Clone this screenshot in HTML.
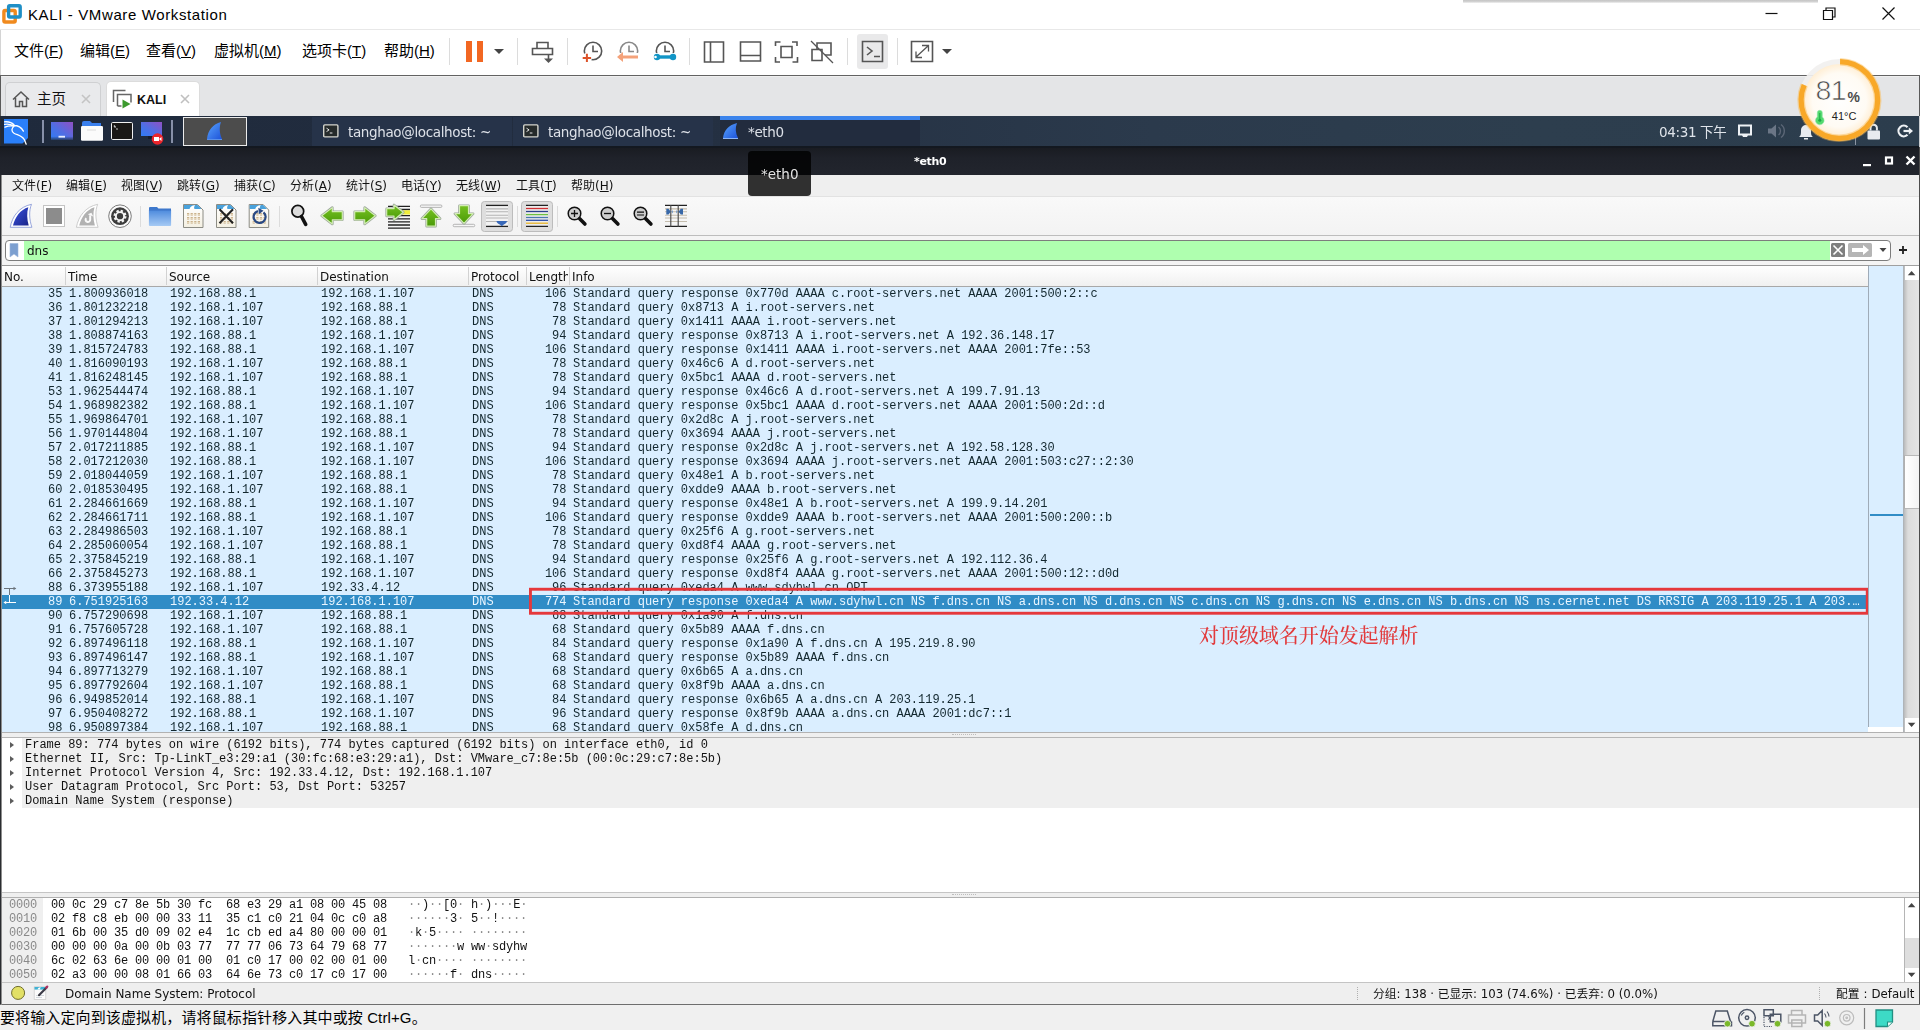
<!DOCTYPE html>
<html lang="zh-CN"><head><meta charset="utf-8"><title>KALI - VMware Workstation</title>
<style>
*{box-sizing:border-box;margin:0;padding:0}
html,body{width:1920px;height:1030px;overflow:hidden;background:#fff}
body{position:relative;font-family:"Liberation Sans","Noto Sans CJK SC",sans-serif;color:#000}
.abs{position:absolute}
#rows,#details,#hex,.ph,.wm,.st,.ptxt,#ftext,.gs{will-change:transform}
#titlebar{left:0;top:0;width:1920px;height:30px;background:#fff;border-bottom:1px solid #e8e8e8}
#vtitle{left:28px;top:4px;font-size:15px;letter-spacing:.62px;line-height:22px;color:#000;white-space:nowrap}
#vmenu{left:0;top:30px;width:1920px;height:46px;background:#fff;border-bottom:1px solid #626262}
.vm{top:41px;font-size:15px;line-height:20px;white-space:nowrap;color:#000;font-family:"Liberation Sans","Noto Sans CJK SC",sans-serif}
.vm u{text-decoration:underline;text-underline-offset:1px}
#tabarea{left:0;top:76px;width:1920px;height:40px;background:#e4e5e7;border-top:1px solid #efefef}
.vtab{top:82px;height:34px;border:1px solid #d0d0d0;border-bottom:none;border-radius:5px 5px 0 0;font-size:14px;line-height:32px;white-space:nowrap}
#panel{left:0;top:116px;width:1920px;height:31px;background:linear-gradient(90deg,#1f2a3c 0,#222d3f 30%,#2b3a4c 60%,#2d3e4e 80%,#2c3d4d 100%)}
.ptxt{top:122px;font-family:"DejaVu Sans","Noto Sans CJK SC",sans-serif;font-size:13.5px;letter-spacing:-.36px;line-height:20px;color:#dde1e8;white-space:nowrap}
#wtitle{left:0;top:147px;width:1920px;height:28px;background:linear-gradient(#191b21,#1f222a 40%,#22252d)}
#wmenu{left:2px;top:175px;width:1917px;height:21px;background:#efefef}
.wm{top:177px;font-size:12px;line-height:18px;white-space:nowrap;color:#111;font-family:"DejaVu Sans","Noto Sans CJK SC",sans-serif}
#wtool{left:2px;top:196px;width:1917px;height:40px;background:linear-gradient(#f9f9f9,#f3f3f3);border-top:1px solid #e2e2e2;border-bottom:1px solid #bdbdbd}
#wfilter{left:2px;top:236px;width:1917px;height:29px;background:#f4f4f4}
#fbox{left:5px;top:240px;width:1886px;height:21px;border:1px solid #7d7d7d;border-radius:4px;background:#fff;overflow:hidden}
#fgreen{left:18px;top:0;width:1806px;height:19px;background:#afffaf}
#ftext{left:27px;top:242px;font-family:"DejaVu Sans",sans-serif;font-size:12px;line-height:18px;color:#111}
#plist{left:2px;top:265px;width:1917px;height:467px;background:#fff;border-top:1px solid #a0a0a0}
#phead{left:2px;top:265px;width:1867px;height:22px;background:linear-gradient(#ffffff,#f0f0f0);border-top:1px solid #9a9a9a;border-bottom:1px solid #a8a8a8}
.ph{top:269px;font-family:"DejaVu Sans",sans-serif;font-size:12px;line-height:16px;color:#111;white-space:nowrap}
.phs{top:267px;width:1px;height:18px;background:#d2d2d2}
#rows{left:2px;top:287px;width:1866px;height:445px;background:#daeeff;overflow:hidden;font-family:"Liberation Mono",monospace;font-size:12px;line-height:14px;color:#12272e;letter-spacing:-.0134px}
.r{position:relative;height:14px;width:1866px;white-space:pre}
.r span{position:absolute;top:0;height:14px}
.c0{left:0;width:60.5px;text-align:right}
.c1{left:67px}.c2{left:168px}.c3{left:319px}.c4{left:470px}
.c5{left:520px;width:44.5px;text-align:right}
.c6{left:571px}
.r.sel{background:#308cc6;color:#eaf6ff}
#mini{left:1868px;top:266px;width:36px;height:461px;background:#daeeff;border-left:1px solid #9fabb8}
#vsb{left:1903px;top:266px;width:16px;height:466px;background:linear-gradient(90deg,#a8aeb4 0,#c4c4c4 2px,#dcdcdc 5px,#e4e4e4 100%)}
#split1{left:2px;top:732px;width:1917px;height:5px;background:#efefef;border-top:1px solid #b2b2b2}
#details{left:2px;top:737px;border-top:1px solid #b6b6b6;width:1917px;height:155px;background:#fff;font-family:"Liberation Mono",monospace;font-size:12px;letter-spacing:-.0134px;line-height:14px;color:#111}
.d{position:relative;height:14px;white-space:pre}
.d i{position:absolute;left:8px;top:4px;width:0;height:0;border-left:4px solid #5c5c5c;border-top:3.5px solid transparent;border-bottom:3.5px solid transparent}
.d span{position:absolute;left:20px;right:0;top:0;height:14px;background:#efefef;padding-left:3px}
#split2{left:2px;top:892px;width:1917px;height:5px;background:#efefef;border-top:1px solid #c5c5c5}
#hex{left:2px;top:897px;width:1917px;height:85px;background:#fff;font-family:"Liberation Mono",monospace;font-size:12px;letter-spacing:-.2px;line-height:14px;color:#111;overflow:hidden;border-top:1px solid #b0b0b0}
.h{position:relative;height:14px;white-space:pre}
.h b{position:absolute;left:0;top:0;width:41px;height:14px;background:#efefef;color:#8a8a8a;font-weight:normal;padding-left:7px}
.h span{position:absolute;top:0}
.h em{font-style:normal;color:#8c8c8c}
.h .x{left:49px}.h .a{left:406px}
#wstatus{left:2px;top:982px;width:1917px;height:22px;background:#efefef;border-top:1px solid #c4c4c4}
.st{top:986px;font-family:"DejaVu Sans","Noto Sans CJK SC",sans-serif;font-size:12px;line-height:16px;color:#111;white-space:nowrap}
#vstatus{left:0;top:1004px;width:1920px;height:26px;background:#f0f0f0;border-top:1px solid #6e6e6e}
#vstext{left:0px;top:1008px;letter-spacing:.12px;font-size:15px;line-height:20px;white-space:nowrap;color:#000}
</style></head><body>
<!-- VMware title bar -->
<div id="titlebar" class="abs"></div>
<svg class="abs" style="left:0px;top:0px" width="26" height="28" viewBox="0 0 26 28"><rect x="3.900" y="10.450" width="11.300" height="11.600" rx="1.200" fill="none" stroke="#f08a1e" stroke-width="3.400"/><rect x="8.600" y="5.700" width="11.600" height="11.350" rx="1.200" fill="none" stroke="#1f8fc6" stroke-width="3.400"/></svg>
<div id="vtitle" class="abs">KALI - VMware Workstation</div>
<svg class="abs" style="left:1760px;top:3px" width="140" height="22" viewBox="0 0 140 22"><path d="M5.5 10.5h12" stroke="#111" stroke-width="1.2"/><path d="M63.5 7.5h9v9h-9z M66 7.5v-2.5h9v9h-2.5" fill="none" stroke="#111" stroke-width="1.2"/><path d="M122.5 4.5l12 12M134.5 4.5l-12 12" stroke="#111" stroke-width="1.2"/></svg>
<div class="abs" style="left:1463px;top:0;width:355px;height:3px;background:linear-gradient(#c4c4c4,#d4d4d4 60%,#f4f4f4)"></div>
<!-- VMware menu -->
<div id="vmenu" class="abs"></div>
<div class="abs vm" style="left:14px">文件(<u>F</u>)</div>
<div class="abs vm" style="left:80px">编辑(<u>E</u>)</div>
<div class="abs vm" style="left:146px">查看(<u>V</u>)</div>
<div class="abs vm" style="left:214px">虚拟机(<u>M</u>)</div>
<div class="abs vm" style="left:302px">选项卡(<u>T</u>)</div>
<div class="abs vm" style="left:384px">帮助(<u>H</u>)</div>
<!-- VMware toolbar icons -->
<svg class="abs" style="left:440px;top:30px" width="520" height="45" viewBox="0 0 520 45" fill="none" stroke="#555" stroke-width="1.6">
<g stroke="#dcdcdc" stroke-width="1"><path d="M9.5 8v27M77.5 8v27M127.5 8v27M249.5 8v27M407.5 8v27M457.5 8v27"/></g>
<rect x="26" y="11" width="6" height="21" fill="#f26722" stroke="none"/><rect x="37" y="11" width="6" height="21" fill="#f26722" stroke="none"/>
<path d="M54 19h10l-5 5z" fill="#444" stroke="none"/>
<!-- send ctrl-alt-del -->
<path d="M97 12.500h11v6h-11z M92.500 18.500h20v6h-20z M108.500 24.500v5" /><path d="M104 28.500h9l-4.500 4.500z" fill="#555" stroke="none"/>
<!-- snapshot clocks -->
<circle cx="153" cy="21" r="8.700"/><path d="M153 15.500v6h5"/><circle cx="146.900" cy="27.900" r="5" fill="#fff" stroke="none"/><path d="M142.700 27.900h8.400M146.900 23.700v8.400" stroke="#dc532a" stroke-width="2"/>
<circle cx="189" cy="21" r="8.700" stroke="#888"/><path d="M189 15.500v6h5" stroke="#888"/><rect x="177" y="23" width="24" height="8" fill="#fff" stroke="none"/><path d="M179 27h19" stroke="#f4a27a" stroke-width="3"/><path d="M183 22l-6 5l6 5z" fill="#f4a27a" stroke="none"/>
<circle cx="225" cy="21" r="8.700"/><path d="M225 15.500v6h5"/><rect x="213" y="23" width="24" height="8" fill="#fff" stroke="none"/><path d="M216 27h17" stroke="#1295c6" stroke-width="3.400"/><circle cx="217" cy="27" r="3.200" fill="#1295c6" stroke="none"/><circle cx="233" cy="27" r="3.200" fill="#1295c6" stroke="none"/><circle cx="215.500" cy="27" r="1.300" fill="#fff" stroke="none"/>
<!-- layout icons -->
<path d="M264.500 12h19v20h-19z M270.500 12v20"/>
<path d="M300.500 12h20v19h-20z M300.500 25.500h20"/>
<path d="M335.500 16v-4h5M352 12h5v4M357.500 27v5h-5M340 32h-4.500v-5M341 16.500h11v11h-11z"/>
<path d="M372 19.500h10v11h-10z M377 19v-6h14v12h-6" stroke="#555"/><path d="M371 11l22 22" stroke="#555" stroke-width="1.300"/>
<!-- console button -->
<rect x="417" y="4" width="31" height="35" rx="3" fill="#e9e9ea" stroke="none"/>
<path d="M422.500 11.500h20v20h-20z"/><path d="M427 17l5 4l-5 4M434 26.500h6"/>
<!-- fullscreen -->
<path d="M471.500 11.500h21v20h-21z" /><path d="M476 27l12-11M482 15.500h6.500v6M476 21.500v6h6" stroke-width="1.300"/>
<path d="M502 19h10l-5 5z" fill="#444" stroke="none"/>
</svg>
<!-- Tab area -->
<div id="tabarea" class="abs"></div>
<div class="abs" style="left:0;top:30px;width:1px;height:45px;background:#d4d4d4"></div><div class="abs" style="left:0;top:76px;width:1px;height:40px;background:#5a5a5a"></div>
<div class="abs vtab" style="left:5px;width:96px;background:#e9eaec;border-color:#cfd0d2"></div>
<svg class="abs" style="left:11px;top:89px" width="20" height="20" viewBox="0 0 20 20" fill="none" stroke="#555" stroke-width="1.500"><path d="M2 10.500l8-7.500l8 7.500M4.500 9v8.500h4v-5h3v5h4v-8.500"/></svg>
<div class="abs" style="left:37px;top:89px;font-size:14.500px;line-height:20px;color:#111">主页</div>
<svg class="abs" style="left:80px;top:93px" width="12" height="12" viewBox="0 0 12 12"><path d="M2 2l8 8M10 2l-8 8" stroke="#c4c4c4" stroke-width="1.600"/></svg>
<div class="abs vtab" style="left:106px;top:81px;height:35px;width:94px;background:#fff;border-color:#dcdcdc"></div>
<svg class="abs" style="left:112px;top:88px" width="22" height="22" viewBox="0 0 22 22" fill="none" stroke="#666" stroke-width="1.500"><path d="M1.500 14v-11.500h12"/><path d="M5.500 18v-11.500h13.500v8"/><path d="M5.500 18h4"/><path d="M10.500 11.500v9l8-4.500z" fill="#3c9a2e" stroke="none"/></svg>
<div class="abs" style="left:137px;top:90px;font-size:12.500px;font-weight:bold;line-height:20px;color:#111;letter-spacing:0px">KALI</div>
<svg class="abs" style="left:179px;top:93px" width="12" height="12" viewBox="0 0 12 12"><path d="M2 2l8 8M10 2l-8 8" stroke="#c0c0c0" stroke-width="1.600"/></svg>
<!-- Kali panel -->
<div id="panel" class="abs"></div>
<div class="abs" style="left:0;top:116px;width:1px;height:889px;background:#2a2c30"></div><div class="abs" style="z-index:3;left:1px;top:175px;width:1px;height:830px;background:#8e8e8e"></div>
<div class="abs" style="z-index:4;left:1919px;top:76px;width:1px;height:40px;background:#5a5a5a"></div><div class="abs" style="z-index:4;left:1919px;top:116px;width:1px;height:31px;background:#c8ccd0"></div><div class="abs" style="z-index:4;left:1919px;top:147px;width:1px;height:857px;background:#4c4c4c"></div>
<!-- kali menu logo -->
<svg class="abs" style="left:4px;top:119px" width="26" height="28" viewBox="0 0 26 28"><path d="M0 0h24v19l-5.500 5.500h-18.500z" fill="#2a80fb"/><path d="M0.500 2.800c3.500-.3 7.500.7 9.800 3.400M0.500 5.300c3.500-.6 6.500 0 9.300 1.500M1 8.200c3-1.400 6-1.700 9-1M9.800 6.500c3.800 0 7.500 1.800 9.600 5.600M10.300 7c-2.800 2-3.300 5.200-.3 7.200c3.500 2 8 2.300 10.400 6.600l1.800 4.400" fill="none" stroke="#fff" stroke-width="1.300" stroke-linecap="round"/></svg>
<div class="abs" style="left:42px;top:120px;width:2px;height:23px;background:#8790a8"></div>
<div class="abs" style="left:171px;top:120px;width:2px;height:23px;background:#8790a8"></div>
<!-- desktop icon -->
<svg class="abs" style="left:50px;top:121px" width="24" height="20" viewBox="0 0 24 20"><defs><linearGradient id="gd" x1="0" y1="1" x2="1" y2="0"><stop offset="0" stop-color="#2f7cf6"/><stop offset=".45" stop-color="#4f6ee4"/><stop offset="1" stop-color="#9050c4"/></linearGradient><linearGradient id="gdf" x1="0" y1="0" x2="0" y2="1"><stop offset="0" stop-color="#222d40" stop-opacity="0"/><stop offset=".8" stop-color="#222d40" stop-opacity="0"/><stop offset="1" stop-color="#222d40" stop-opacity=".8"/></linearGradient></defs><rect x="1" y="1" width="22" height="18" fill="url(#gd)"/><rect x="1" y="1" width="22" height="18" fill="url(#gdf)"/><rect x="8.500" y="14.800" width="6.500" height="1.800" fill="#e8eeff"/></svg>
<!-- folder -->
<svg class="abs" style="left:80px;top:120px" width="24" height="22" viewBox="0 0 24 22"><path d="M2 3a2 2 0 0 1 2-2h6l2 2h9v6h-19z" fill="#3a80ee"/><rect x="1" y="6" width="22" height="14.800" rx="1.200" fill="#fbfbfb"/><rect x="7" y="9.500" width="9" height="1" fill="#dcdcdc"/></svg>
<!-- terminal -->
<svg class="abs" style="left:110px;top:121px" width="24" height="20" viewBox="0 0 24 20"><rect x="1.500" y="1.500" width="21" height="17" rx="1.200" fill="#1a1816" stroke="#f0f0f0" stroke-width="1"/><path d="M4 4.500l1.500 2M6.500 7.500l1 1" stroke="#ccc" stroke-width="1.300" fill="none"/></svg>
<!-- recorder -->
<svg class="abs" style="left:140px;top:121px" width="26" height="24" viewBox="0 0 26 24"><rect x="1" y="1" width="21" height="14" fill="url(#gd)"/><rect x="8" y="15" width="8" height="3" fill="#161c2a"/><circle cx="17.500" cy="18" r="5.800" fill="#ea252c"/><rect x="14" y="16" width="5" height="4" fill="#fff"/><path d="M19 18l2.500-2v4z" fill="#fff"/></svg>
<!-- active window button -->
<div class="abs" style="left:183px;top:117px;width:64px;height:29px;background:#4c4c4c;border:1px solid #ececec"></div>
<svg class="abs" style="left:206px;top:121px" width="18" height="20" viewBox="0 0 18 20"><defs><linearGradient id="gf" x1="0" y1="0" x2="1" y2="1"><stop offset="0" stop-color="#5aa6ff"/><stop offset="1" stop-color="#1d52d8"/></linearGradient></defs><path d="M1 18c1-9 6-15 14-17c-2 5-1.500 12 1 17z" fill="url(#gf)"/><path d="M1 18.500h15" stroke="#5a90e8" stroke-width="1"/></svg>
<!-- task buttons -->
<div class="abs" style="left:312px;top:117px;width:200px;height:30px;background:#263349"></div>
<div class="abs" style="left:513px;top:117px;width:200px;height:30px;background:#263349"></div>
<div class="abs" style="left:720px;top:116px;width:200px;height:31px;background:#222c3e;border-top:4px solid #3b84ec"></div>
<svg class="abs" style="left:322px;top:123px" width="18" height="16" viewBox="0 0 18 16"><rect x="1.700" y="1.900" width="14.200" height="12" rx="1" fill="#262b2b" stroke="#d4d4cc" stroke-width="1.400"/><path d="M4.500 5.200l2.600 1.700l-2.600 1.700M7.800 10h2.600" stroke="#e8e8e8" stroke-width="1" fill="none"/></svg>
<svg class="abs" style="left:522px;top:123px" width="18" height="16" viewBox="0 0 18 16"><rect x="1.700" y="1.900" width="14.200" height="12" rx="1" fill="#262b2b" stroke="#d4d4cc" stroke-width="1.400"/><path d="M4.500 5.200l2.600 1.700l-2.600 1.700M7.800 10h2.600" stroke="#e8e8e8" stroke-width="1" fill="none"/></svg>
<svg class="abs" style="left:722px;top:122px" width="18" height="18" viewBox="0 0 18 18"><path d="M1 16c1-8 6-13 14-15c-2 5-1.500 10 1 15z" fill="url(#gf)"/><path d="M1 16.500h15" stroke="#8ab4f8" stroke-width="1"/></svg>
<div class="abs ptxt" style="left:348px">tanghao@localhost: ~</div>
<div class="abs ptxt" style="left:548px">tanghao@localhost: ~</div>
<div class="abs ptxt" style="left:748px">*eth0</div>
<div class="abs ptxt" style="left:1659px;color:#dfe4ea">04:31 下午</div>
<!-- tray icons -->
<svg class="abs" style="left:1730px;top:118px" width="190" height="28" viewBox="0 0 190 28" fill="none">
<path d="M9 7.500h12v9h-12z" stroke="#eef1f4" stroke-width="2"/><path d="M12 17h6l-1 2h-4z" fill="#eef1f4"/>
<path d="M38 10.500h3.500l4.500-4v13l-4.500-4h-3.500z" fill="#6b7686"/><path d="M48.500 9a5 5 0 0 1 0 8M51 6.500a8 8 0 0 1 0 13" stroke="#5b6676" stroke-width="1.400"/>
<path d="M69 19c2-1.500 2-3 2-7a5 5 0 0 1 10 0c0 4 0 5.500 2 7z" fill="#e8ebef"/><rect x="74" y="20" width="4" height="1.500" fill="#e8ebef"/>
<rect x="137.500" y="12.500" width="12.500" height="9" rx="1" fill="#e8ebef"/><path d="M140.500 12.500v-2.500a3.200 3.200 0 0 1 6.400 0v2.500" stroke="#e8ebef" stroke-width="2"/>
<path d="M177.500 9.200a5.300 5.300 0 1 0 0 7.600" stroke="#eef1f4" stroke-width="2.200"/><path d="M173.500 13h6" stroke="#eef1f4" stroke-width="2.200"/><path d="M178.800 9.500l4.200 3.500l-4.200 3.500z" fill="#eef1f4"/>
<path d="M125.500 18v9" stroke="#8b95a3" stroke-width="1"/>
</svg>
<!-- Wireshark window title -->
<div id="wtitle" class="abs"></div>
<div class="abs" style="left:0;top:146px;width:1920px;height:2px;background:#131820"></div>
<div class="abs gs" style="left:914px;top:154px;font-family:'DejaVu Sans',sans-serif;font-weight:bold;font-size:11px;letter-spacing:-.35px;line-height:16px;color:#fff">*eth0</div>
<svg class="abs" style="left:1856px;top:152px" width="64" height="18" viewBox="0 0 64 18"><rect x="7" y="12" width="8" height="2.200" fill="#fff"/><rect x="30" y="5.500" width="6" height="6" fill="none" stroke="#fff" stroke-width="2.200"/><path d="M50.500 4.500l8 8M58.500 4.500l-8 8" stroke="#fff" stroke-width="2.400"/></svg>
<!-- tooltip -->
<div class="abs" style="z-index:5;left:748px;top:151px;width:63px;height:45px;background:rgba(0,0,0,.8);border-radius:4px"></div>
<div class="abs gs" style="z-index:6;left:761px;top:164px;font-family:'DejaVu Sans',sans-serif;font-size:13.500px;line-height:20px;color:#e4e4e4">*eth0</div>
<!-- Wireshark menu -->
<div id="wmenu" class="abs"></div>
<div class="abs wm" style="left:12px">文件(<u>F</u>)</div>
<div class="abs wm" style="left:66px">编辑(<u>E</u>)</div>
<div class="abs wm" style="left:121px">视图(<u>V</u>)</div>
<div class="abs wm" style="left:177px">跳转(<u>G</u>)</div>
<div class="abs wm" style="left:234px">捕获(<u>C</u>)</div>
<div class="abs wm" style="left:290px">分析(<u>A</u>)</div>
<div class="abs wm" style="left:346px">统计(<u>S</u>)</div>
<div class="abs wm" style="left:401px">电话(<u>Y</u>)</div>
<div class="abs wm" style="left:456px">无线(<u>W</u>)</div>
<div class="abs wm" style="left:516px">工具(<u>T</u>)</div>
<div class="abs wm" style="left:571px">帮助(<u>H</u>)</div>
<!-- Wireshark toolbar -->
<div id="wtool" class="abs"></div>
<svg class="abs" style="left:0;top:198px" width="700" height="38" viewBox="0 0 700 38">
<defs>
<linearGradient id="fin" x1="0" y1="0" x2="1" y2="1"><stop offset="0" stop-color="#3a52e0"/><stop offset="1" stop-color="#1a2488"/></linearGradient>
<linearGradient id="grn" x1="0" y1="0" x2="0" y2="1"><stop offset="0" stop-color="#74c020"/><stop offset="1" stop-color="#4a9a08"/></linearGradient>
<linearGradient id="fld" x1="0" y1="0" x2="0" y2="1"><stop offset="0" stop-color="#4a88dc"/><stop offset="1" stop-color="#a6caf4"/></linearGradient>
<linearGradient id="pg" x1="0" y1="0" x2="0" y2="1"><stop offset="0" stop-color="#fff"/><stop offset="1" stop-color="#f4f0e2"/></linearGradient>
</defs>
<!-- start fin -->
<path d="M10.200 29.300c2-11 9-20.500 21.300-23c-2.600 6-2.400 15 .4 23z" fill="#fff" stroke="#8c9cd8" stroke-width=".9"/><path d="M13 27.600c2-8.500 7.500-16 15.300-18.300c-1.600 5.500-1.400 12 .4 18.300z" fill="url(#fin)"/>
<!-- stop -->
<rect x="43.500" y="7.500" width="21" height="21" fill="#fff" stroke="#c4c4c4" stroke-width="1"/><rect x="46" y="10" width="16" height="16" fill="#8c8c8c"/>
<!-- restart -->
<path d="M76.400 29.300c2-11 9-20.500 21.300-23c-2.600 6-2.400 15 .4 23z" fill="#fff" stroke="#c6c6c6" stroke-width=".9"/><path d="M79.200 27.600c2-8.500 7.500-16 15.300-18.300c-1.600 5.500-1.400 12 .4 18.300z" fill="#b2b2b2"/><path d="M90.200 17.200v4.300a2.300 2.300 0 1 1-4 -1.400" fill="none" stroke="#fafafa" stroke-width="2"/><path d="M87.800 16.300l3.600-1.500l1.800 3.800z" fill="#fafafa"/>
<!-- gear -->
<circle cx="120" cy="18.200" r="11.300" fill="#fafafa" stroke="#7c7c7c" stroke-width="1"/><circle cx="120" cy="18.200" r="8.900" fill="#3c3c3c"/><circle cx="120" cy="18.200" r="5.400" fill="none" stroke="#f4f4f4" stroke-width="2.200" stroke-dasharray="2.300 1.940"/><circle cx="120" cy="18.200" r="4.100" fill="none" stroke="#f4f4f4" stroke-width="1.900"/>
<path d="M140.500 8v21M279.500 8v21M517.500 8v21M557.500 8v21" stroke="#dcdcdc" stroke-width="1"/>
<!-- folder -->
<path d="M149 10a1 1 0 0 1 1-1h7l1.500 1.500h12.500v3h-22z" fill="#3d78cc"/><rect x="148.900" y="11.500" width="22.200" height="16.500" rx="1" fill="url(#fld)"/><path d="M149 12h22" stroke="#3a70c4" stroke-width="1"/>
<!-- file bits -->
<g><path d="M183.500 6.500h14l5.500 5.500v17.500h-19.500z" fill="url(#pg)" stroke="#8c8c84" stroke-width="1"/><path d="M184 7h13.500l3.500 3.500v.500h-17z" fill="#4aa2dc"/><path d="M189.500 11c1-2.800 3.600-4 5.600-3.600c-1 1-1.400 2.400-.5 3.600z" fill="#fff"/><path d="M187 16.300h13M187 20.300h13M187 24.300h13" stroke="#c4a880" stroke-width="2.600" stroke-dasharray="2.200 1.400"/><path d="M187 16.300h13M187 20.300h13M187 24.300h13" stroke="#f4ecd8" stroke-width=".8"/></g>
<g transform="translate(33 0)"><path d="M183.500 6.500h14l5.500 5.500v17.500h-19.500z" fill="url(#pg)" stroke="#8c8c84" stroke-width="1"/><path d="M184 7h13.500l3.500 3.500v.500h-17z" fill="#4aa2dc"/><path d="M189.500 11c1-2.800 3.600-4 5.600-3.600c-1 1-1.400 2.400-.5 3.600z" fill="#fff"/><path d="M187 16.300h13M187 20.300h13M187 24.300h13" stroke="#c4a880" stroke-width="2.600" stroke-dasharray="2.200 1.400"/><path d="M187 16.300h13M187 20.300h13M187 24.300h13" stroke="#f4ecd8" stroke-width=".8"/></g><path d="M219.500 11.300l13.500 14M233 11.300l-13.500 14" stroke="#222" stroke-width="2.100"/>
<g transform="translate(65.700 0)"><path d="M183.500 6.500h14l5.500 5.500v17.500h-19.500z" fill="url(#pg)" stroke="#8c8c84" stroke-width="1"/><path d="M184 7h13.500l3.500 3.500v.500h-17z" fill="#4aa2dc"/><path d="M189.500 11c1-2.800 3.600-4 5.600-3.600c-1 1-1.400 2.400-.5 3.600z" fill="#fff"/><path d="M187 16.300h13M187 20.300h13M187 24.300h13" stroke="#c4a880" stroke-width="2.600" stroke-dasharray="2.200 1.400"/><path d="M187 16.300h13M187 20.300h13M187 24.300h13" stroke="#f4ecd8" stroke-width=".8"/></g><path d="M263.500 14.300a6 6 0 1 1-5.500-1.200" fill="none" stroke="#2a4a84" stroke-width="2.200"/><path d="M258.300 9.800l5.200 3l-4.600 3.400z" fill="#2a4a84"/>
<!-- find -->
<circle cx="297.800" cy="13.300" r="5.900" fill="#dcdcdc" stroke="#111" stroke-width="1.700"/><path d="M301.500 18.500l4.200 7.800" stroke="#111" stroke-width="3.600" stroke-linecap="round"/>
<!-- back / forward -->
<g stroke-linejoin="round">
<path id="ab" d="M321.700 17.800L332.300 9.600V13.700H342.300V21.800H332.300V26L321.700 17.800Z" fill="none" stroke="#9aa49a" stroke-width="2.600"/><path d="M321.700 17.800L332.300 9.600V13.700H342.300V21.800H332.300V26Z" fill="url(#grn)" stroke="#d2ecb4" stroke-width="1.200"/>
<path d="M375.300 17.800L364.700 9.600V13.700H354.700V21.800H364.700V26Z" fill="none" stroke="#9aa49a" stroke-width="2.600"/><path d="M375.300 17.800L364.700 9.600V13.700H354.700V21.800H364.700V26Z" fill="url(#grn)" stroke="#d2ecb4" stroke-width="1.200"/>
<!-- goto -->
<path d="M388 8.400h22M388 11.500h22M388 14.600h22M388 17.700h22M388 20.800h22M388 23.900h22M388 27h22M388 30.100h22" stroke="#222" stroke-width="1.300"/><rect x="402" y="12.300" width="8" height="4.200" fill="#f0ee3a"/>
<path d="M403.300 14.300L394 7V10.700H386.700V18H394V21.700Z" fill="none" stroke="#9aa49a" stroke-width="2.600"/><path d="M403.300 14.300L394 7V10.700H386.700V18H394V21.700Z" fill="url(#grn)" stroke="#d2ecb4" stroke-width="1.200"/>
<!-- top -->
<rect x="420.400" y="7" width="21.500" height="2.400" rx="1" fill="#f6f6f6" stroke="#a4a4a4" stroke-width=".8"/>
<path d="M431 10.800L421.900 20.600H426.700V28.200H435.500V20.600H440.100Z" fill="none" stroke="#9aa49a" stroke-width="2.600"/><path d="M431 10.800L421.900 20.600H426.700V28.200H435.500V20.600H440.100Z" fill="url(#grn)" stroke="#d2ecb4" stroke-width="1.200"/>
<!-- bottom -->
<rect x="453.200" y="26.300" width="21.500" height="2.400" rx="1" fill="#f6f6f6" stroke="#a4a4a4" stroke-width=".8"/>
<path d="M464 25.400L454.900 15.700H459.500V7.700H468.500V15.700H473.100Z" fill="none" stroke="#9aa49a" stroke-width="2.600"/><path d="M464 25.400L454.900 15.700H459.500V7.700H468.500V15.700H473.100Z" fill="url(#grn)" stroke="#d2ecb4" stroke-width="1.200"/>
</g>
<!-- autoscroll -->
<rect x="481.500" y="3.500" width="31" height="30" rx="3" fill="#dedede" stroke="#bcbcbc"/><rect x="486" y="7" width="22" height="22" fill="#f2f2f2"/><path d="M486 7.400h22" stroke="#222" stroke-width="1.300"/><path d="M486 10.900h22M486 13.800h22M486 17.200h22M486 20h22M486 23.500h22" stroke="#b4b4b4" stroke-width="1.100"/><path d="M486 28.400h22" stroke="#222" stroke-width="1.300"/><path d="M496.500 23h10.500c0 2-2 3-3.200 3.400l-2 1.800l-2-1.800c-1.300-.4-3.300-1.400-3.300-3.400z" fill="#3868b8"/>
<!-- colorize -->
<rect x="521.500" y="3.500" width="31" height="30" rx="3" fill="#dedede" stroke="#bcbcbc"/><rect x="526" y="7" width="22" height="22" fill="#ececec"/><path d="M526 7.400h22M526 28.400h22" stroke="#222" stroke-width="1.300"/><path d="M526 10.500h22" stroke="#d03034" stroke-width="1.300"/><path d="M526 13.500h22" stroke="#2c3f8c" stroke-width="1.300"/><path d="M526 16.600h22" stroke="#6cc040" stroke-width="1.300"/><path d="M526 19.500h22" stroke="#4a78b0" stroke-width="1.300"/><path d="M526 22.300h22" stroke="#2c4ca8" stroke-width="1.300"/><path d="M526 25.200h22" stroke="#e8b428" stroke-width="1.300"/>
<!-- zoom in/out/1 -->
<g><circle cx="574.500" cy="15.500" r="6.300" fill="#cdcdcd" stroke="#111" stroke-width="1.500"/><path d="M579.700 20.700l5.200 5.300" stroke="#111" stroke-width="3.600" stroke-linecap="round"/></g><path d="M571 15.500h7M574.500 12v7" stroke="#111" stroke-width="1.300"/>
<g transform="translate(33 0)"><circle cx="574.500" cy="15.500" r="6.300" fill="#cdcdcd" stroke="#111" stroke-width="1.500"/><path d="M579.700 20.700l5.200 5.300" stroke="#111" stroke-width="3.600" stroke-linecap="round"/></g><path d="M604 15.500h7" stroke="#111" stroke-width="1.300"/>
<g transform="translate(66 0)"><circle cx="574.500" cy="15.500" r="6.300" fill="#cdcdcd" stroke="#111" stroke-width="1.500"/><path d="M579.700 20.700l5.200 5.300" stroke="#111" stroke-width="3.600" stroke-linecap="round"/></g><path d="M637 14.200h7M637 17h7" stroke="#111" stroke-width="1.200"/>
<!-- resize cols -->
<path d="M665 10.900h22M665 13.800h22M665 17.200h22M665 20h22M665 23.500h22" stroke="#c4bcac" stroke-width="1.100"/><path d="M665 7.400h22M665 28.400h22" stroke="#222" stroke-width="1.300"/><path d="M670.800 7v22M678.200 7v22" stroke="#444" stroke-width="1.100"/><path d="M666.300 10.800h2.200l2.300 2.900l-2.300 2.900h-2.200zM683 10.800h-2.200l-2.300 2.900l2.300 2.900h2.200z" fill="#3868a8"/><path d="M671.500 13.700l1.500-1.800v3.600zM677.600 13.700l-1.500-1.800v3.600z" fill="#7a9cc8"/>
</svg>
<!-- Filter bar -->
<div id="wfilter" class="abs"></div>
<div id="fbox" class="abs"><div id="fgreen" class="abs"></div></div>
<svg class="abs" style="left:9px;top:243px" width="10" height="15" viewBox="0 0 10 15"><path d="M1 .500h8v13.500l-4-3l-4 3z" fill="#7c9fd0" stroke="#9cb6dc" stroke-width=".6"/></svg>
<div id="ftext" class="abs">dns</div>
<svg class="abs" style="left:1828px;top:240px" width="92" height="21" viewBox="0 0 92 21"><rect x="3" y="3" width="14" height="14" rx="1.500" fill="#7f7f7f"/><path d="M5.500 5.500l9 9M14.500 5.500l-9 9" stroke="#fff" stroke-width="1.600"/><rect x="20" y="3" width="24" height="14" rx="1.500" fill="#b5b5b5"/><path d="M24 8h11v-3l6 5l-6 5v-3h-11z" fill="#fff"/><path d="M51.500 8h7l-3.500 4z" fill="#444"/><path d="M71 10h8M75 6v8" stroke="#222" stroke-width="1.800"/></svg>
<!-- Packet list -->
<div id="plist" class="abs"></div>
<div id="phead" class="abs"></div>
<div class="abs ph" style="left:4px">No.</div><div class="abs phs" style="left:65px"></div>
<div class="abs ph" style="left:68px">Time</div><div class="abs phs" style="left:166px"></div>
<div class="abs ph" style="left:169px">Source</div><div class="abs phs" style="left:317px"></div>
<div class="abs ph" style="left:320px">Destination</div><div class="abs phs" style="left:468px"></div>
<div class="abs ph" style="left:471px">Protocol</div><div class="abs phs" style="left:526px"></div>
<div class="abs ph" style="left:529px;width:39px;overflow:hidden">Length</div><div class="abs phs" style="left:569px"></div>
<div class="abs ph" style="left:572px">Info</div>
<div id="rows" class="abs">
<div class="r"><span class="c0">35</span><span class="c1">1.800936018</span><span class="c2">192.168.88.1</span><span class="c3">192.168.1.107</span><span class="c4">DNS</span><span class="c5">106</span><span class="c6">Standard query response 0x770d AAAA c.root-servers.net AAAA 2001:500:2::c</span></div>
<div class="r"><span class="c0">36</span><span class="c1">1.801232218</span><span class="c2">192.168.1.107</span><span class="c3">192.168.88.1</span><span class="c4">DNS</span><span class="c5">78</span><span class="c6">Standard query 0x8713 A i.root-servers.net</span></div>
<div class="r"><span class="c0">37</span><span class="c1">1.801294213</span><span class="c2">192.168.1.107</span><span class="c3">192.168.88.1</span><span class="c4">DNS</span><span class="c5">78</span><span class="c6">Standard query 0x1411 AAAA i.root-servers.net</span></div>
<div class="r"><span class="c0">38</span><span class="c1">1.808874163</span><span class="c2">192.168.88.1</span><span class="c3">192.168.1.107</span><span class="c4">DNS</span><span class="c5">94</span><span class="c6">Standard query response 0x8713 A i.root-servers.net A 192.36.148.17</span></div>
<div class="r"><span class="c0">39</span><span class="c1">1.815724783</span><span class="c2">192.168.88.1</span><span class="c3">192.168.1.107</span><span class="c4">DNS</span><span class="c5">106</span><span class="c6">Standard query response 0x1411 AAAA i.root-servers.net AAAA 2001:7fe::53</span></div>
<div class="r"><span class="c0">40</span><span class="c1">1.816090193</span><span class="c2">192.168.1.107</span><span class="c3">192.168.88.1</span><span class="c4">DNS</span><span class="c5">78</span><span class="c6">Standard query 0x46c6 A d.root-servers.net</span></div>
<div class="r"><span class="c0">41</span><span class="c1">1.816248145</span><span class="c2">192.168.1.107</span><span class="c3">192.168.88.1</span><span class="c4">DNS</span><span class="c5">78</span><span class="c6">Standard query 0x5bc1 AAAA d.root-servers.net</span></div>
<div class="r"><span class="c0">53</span><span class="c1">1.962544474</span><span class="c2">192.168.88.1</span><span class="c3">192.168.1.107</span><span class="c4">DNS</span><span class="c5">94</span><span class="c6">Standard query response 0x46c6 A d.root-servers.net A 199.7.91.13</span></div>
<div class="r"><span class="c0">54</span><span class="c1">1.968982382</span><span class="c2">192.168.88.1</span><span class="c3">192.168.1.107</span><span class="c4">DNS</span><span class="c5">106</span><span class="c6">Standard query response 0x5bc1 AAAA d.root-servers.net AAAA 2001:500:2d::d</span></div>
<div class="r"><span class="c0">55</span><span class="c1">1.969864701</span><span class="c2">192.168.1.107</span><span class="c3">192.168.88.1</span><span class="c4">DNS</span><span class="c5">78</span><span class="c6">Standard query 0x2d8c A j.root-servers.net</span></div>
<div class="r"><span class="c0">56</span><span class="c1">1.970144804</span><span class="c2">192.168.1.107</span><span class="c3">192.168.88.1</span><span class="c4">DNS</span><span class="c5">78</span><span class="c6">Standard query 0x3694 AAAA j.root-servers.net</span></div>
<div class="r"><span class="c0">57</span><span class="c1">2.017211885</span><span class="c2">192.168.88.1</span><span class="c3">192.168.1.107</span><span class="c4">DNS</span><span class="c5">94</span><span class="c6">Standard query response 0x2d8c A j.root-servers.net A 192.58.128.30</span></div>
<div class="r"><span class="c0">58</span><span class="c1">2.017212030</span><span class="c2">192.168.88.1</span><span class="c3">192.168.1.107</span><span class="c4">DNS</span><span class="c5">106</span><span class="c6">Standard query response 0x3694 AAAA j.root-servers.net AAAA 2001:503:c27::2:30</span></div>
<div class="r"><span class="c0">59</span><span class="c1">2.018044059</span><span class="c2">192.168.1.107</span><span class="c3">192.168.88.1</span><span class="c4">DNS</span><span class="c5">78</span><span class="c6">Standard query 0x48e1 A b.root-servers.net</span></div>
<div class="r"><span class="c0">60</span><span class="c1">2.018530495</span><span class="c2">192.168.1.107</span><span class="c3">192.168.88.1</span><span class="c4">DNS</span><span class="c5">78</span><span class="c6">Standard query 0xdde9 AAAA b.root-servers.net</span></div>
<div class="r"><span class="c0">61</span><span class="c1">2.284661669</span><span class="c2">192.168.88.1</span><span class="c3">192.168.1.107</span><span class="c4">DNS</span><span class="c5">94</span><span class="c6">Standard query response 0x48e1 A b.root-servers.net A 199.9.14.201</span></div>
<div class="r"><span class="c0">62</span><span class="c1">2.284661711</span><span class="c2">192.168.88.1</span><span class="c3">192.168.1.107</span><span class="c4">DNS</span><span class="c5">106</span><span class="c6">Standard query response 0xdde9 AAAA b.root-servers.net AAAA 2001:500:200::b</span></div>
<div class="r"><span class="c0">63</span><span class="c1">2.284986503</span><span class="c2">192.168.1.107</span><span class="c3">192.168.88.1</span><span class="c4">DNS</span><span class="c5">78</span><span class="c6">Standard query 0x25f6 A g.root-servers.net</span></div>
<div class="r"><span class="c0">64</span><span class="c1">2.285060054</span><span class="c2">192.168.1.107</span><span class="c3">192.168.88.1</span><span class="c4">DNS</span><span class="c5">78</span><span class="c6">Standard query 0xd8f4 AAAA g.root-servers.net</span></div>
<div class="r"><span class="c0">65</span><span class="c1">2.375845219</span><span class="c2">192.168.88.1</span><span class="c3">192.168.1.107</span><span class="c4">DNS</span><span class="c5">94</span><span class="c6">Standard query response 0x25f6 A g.root-servers.net A 192.112.36.4</span></div>
<div class="r"><span class="c0">66</span><span class="c1">2.375845273</span><span class="c2">192.168.88.1</span><span class="c3">192.168.1.107</span><span class="c4">DNS</span><span class="c5">106</span><span class="c6">Standard query response 0xd8f4 AAAA g.root-servers.net AAAA 2001:500:12::d0d</span></div>
<div class="r"><span class="c0">88</span><span class="c1">6.373955188</span><span class="c2">192.168.1.107</span><span class="c3">192.33.4.12</span><span class="c4">DNS</span><span class="c5">96</span><span class="c6">Standard query 0xeda4 A www.sdyhwl.cn OPT</span></div>
<div class="r sel"><span class="c0">89</span><span class="c1">6.751925163</span><span class="c2">192.33.4.12</span><span class="c3">192.168.1.107</span><span class="c4">DNS</span><span class="c5">774</span><span class="c6">Standard query response 0xeda4 A www.sdyhwl.cn NS f.dns.cn NS a.dns.cn NS d.dns.cn NS c.dns.cn NS g.dns.cn NS e.dns.cn NS b.dns.cn NS ns.cernet.net DS RRSIG A 203.119.25.1 A 203.…</span></div>
<div class="r"><span class="c0">90</span><span class="c1">6.757290698</span><span class="c2">192.168.1.107</span><span class="c3">192.168.88.1</span><span class="c4">DNS</span><span class="c5">68</span><span class="c6">Standard query 0x1a90 A f.dns.cn</span></div>
<div class="r"><span class="c0">91</span><span class="c1">6.757605728</span><span class="c2">192.168.1.107</span><span class="c3">192.168.88.1</span><span class="c4">DNS</span><span class="c5">68</span><span class="c6">Standard query 0x5b89 AAAA f.dns.cn</span></div>
<div class="r"><span class="c0">92</span><span class="c1">6.897496118</span><span class="c2">192.168.88.1</span><span class="c3">192.168.1.107</span><span class="c4">DNS</span><span class="c5">84</span><span class="c6">Standard query response 0x1a90 A f.dns.cn A 195.219.8.90</span></div>
<div class="r"><span class="c0">93</span><span class="c1">6.897496147</span><span class="c2">192.168.88.1</span><span class="c3">192.168.1.107</span><span class="c4">DNS</span><span class="c5">68</span><span class="c6">Standard query response 0x5b89 AAAA f.dns.cn</span></div>
<div class="r"><span class="c0">94</span><span class="c1">6.897713279</span><span class="c2">192.168.1.107</span><span class="c3">192.168.88.1</span><span class="c4">DNS</span><span class="c5">68</span><span class="c6">Standard query 0x6b65 A a.dns.cn</span></div>
<div class="r"><span class="c0">95</span><span class="c1">6.897792604</span><span class="c2">192.168.1.107</span><span class="c3">192.168.88.1</span><span class="c4">DNS</span><span class="c5">68</span><span class="c6">Standard query 0x8f9b AAAA a.dns.cn</span></div>
<div class="r"><span class="c0">96</span><span class="c1">6.949852014</span><span class="c2">192.168.88.1</span><span class="c3">192.168.1.107</span><span class="c4">DNS</span><span class="c5">84</span><span class="c6">Standard query response 0x6b65 A a.dns.cn A 203.119.25.1</span></div>
<div class="r"><span class="c0">97</span><span class="c1">6.950408272</span><span class="c2">192.168.88.1</span><span class="c3">192.168.1.107</span><span class="c4">DNS</span><span class="c5">96</span><span class="c6">Standard query response 0x8f9b AAAA a.dns.cn AAAA 2001:dc7::1</span></div>
<div class="r"><span class="c0">98</span><span class="c1">6.950897384</span><span class="c2">192.168.1.107</span><span class="c3">192.168.88.1</span><span class="c4">DNS</span><span class="c5">68</span><span class="c6">Standard query 0x58fe A d.dns.cn</span></div></div>
<!-- related packet marker -->
<svg class="abs" style="left:2px;top:584px" width="18" height="24" viewBox="0 0 18 24" fill="none" stroke-width="1"><path d="M2 4.500h11.500M7.500 4.500v6.500" stroke="#6c747c"/><path d="M11.500 2.700l2.800 1.800l-2.800 1.800z" fill="#6c747c"/><path d="M7.500 11v7.500M3 18.500h11" stroke="#fff"/><path d="M4.200 16.700l-2.800 1.800l2.800 1.800z" fill="#fff"/></svg>
<!-- red annotation -->
<svg class="abs" style="left:520px;top:580px" width="1360" height="40" viewBox="520 580 1360 40"><rect x="530.450" y="589.250" width="1336.800" height="24" fill="none" stroke="#e5383c" stroke-width="2.900"/></svg>
<div class="abs" style="left:1199px;top:622px;font-family:'Noto Serif CJK SC','Noto Sans CJK SC',serif;font-size:20px;font-weight:500;line-height:26px;color:#e23a3c;white-space:nowrap;letter-spacing:-0.05px">对顶级域名开始发起解析</div>
<div id="mini" class="abs"></div>
<div class="abs" style="left:1870px;top:514px;width:34px;height:2px;background:#308cc6"></div>
<div class="abs" style="left:1870px;top:727px;width:34px;height:5px;background:#fff"></div>
<div id="vsb" class="abs"></div>
<div class="abs" style="left:1905px;top:266px;width:14px;height:14px;background:#fff"></div><div class="abs" style="left:1904px;top:455px;width:15px;height:54px;background:linear-gradient(90deg,#fff,#f2f2f2);border-top:1px solid #b8b8b8;border-bottom:1px solid #b8b8b8;border-left:1px solid #b0b0b0"></div>
<div class="abs" style="left:1905px;top:718px;width:14px;height:14px;background:#fff"></div>
<svg class="abs" style="left:1905px;top:266px" width="14" height="14" viewBox="0 0 14 14"><path d="M2.800 9.300h7.600l-3.800-4.200z" fill="#444"/></svg>
<svg class="abs" style="left:1905px;top:718px" width="14" height="14" viewBox="0 0 14 14"><path d="M2.800 4.700h7.600l-3.800 4.200z" fill="#444"/></svg>
<div id="split1" class="abs"></div>
<!-- details -->
<div id="details" class="abs">
<div class="d"><i></i><span>Frame 89: 774 bytes on wire (6192 bits), 774 bytes captured (6192 bits) on interface eth0, id 0</span></div>
<div class="d"><i></i><span>Ethernet II, Src: Tp-LinkT_e3:29:a1 (30:fc:68:e3:29:a1), Dst: VMware_c7:8e:5b (00:0c:29:c7:8e:5b)</span></div>
<div class="d"><i></i><span>Internet Protocol Version 4, Src: 192.33.4.12, Dst: 192.168.1.107</span></div>
<div class="d"><i></i><span>User Datagram Protocol, Src Port: 53, Dst Port: 53257</span></div>
<div class="d"><i></i><span>Domain Name System (response)</span></div>
</div>
<div id="split2" class="abs"></div>
<div class="abs" style="left:952px;top:894px;width:24px;height:1px;border-top:1px dotted #bdbdbd"></div><div class="abs" style="left:952px;top:734px;width:24px;height:1px;border-top:1px dotted #bdbdbd"></div>
<!-- hex -->
<div id="hex" class="abs">
<div class="h"><b>0000</b><span class="x">00 0c 29 c7 8e 5b 30 fc  68 e3 29 a1 08 00 45 08</span><span class="a"><em>··</em>)<em>··</em>[0<em>·</em> h<em>·</em>)<em>···</em>E<em>·</em></span></div>
<div class="h"><b>0010</b><span class="x">02 f8 c8 eb 00 00 33 11  35 c1 c0 21 04 0c c0 a8</span><span class="a"><em>······</em>3<em>·</em> 5<em>··</em>!<em>····</em></span></div>
<div class="h"><b>0020</b><span class="x">01 6b 00 35 d0 09 02 e4  1c cb ed a4 80 00 00 01</span><span class="a"><em>·</em>k<em>·</em>5<em>····</em> <em>········</em></span></div>
<div class="h"><b>0030</b><span class="x">00 00 00 0a 00 0b 03 77  77 77 06 73 64 79 68 77</span><span class="a"><em>·······</em>w ww<em>·</em>sdyhw</span></div>
<div class="h"><b>0040</b><span class="x">6c 02 63 6e 00 00 01 00  01 c0 17 00 02 00 01 00</span><span class="a">l<em>·</em>cn<em>····</em> <em>········</em></span></div>
<div class="h"><b>0050</b><span class="x">02 a3 00 00 08 01 66 03  64 6e 73 c0 17 c0 17 00</span><span class="a"><em>······</em>f<em>·</em> dns<em>·····</em></span></div>
</div>
<div class="abs" style="left:1904px;top:898px;width:15px;height:84px;background:#dedede;border-left:1px solid #b5b5b5"></div>
<div class="abs" style="left:1905px;top:898px;width:14px;height:40px;background:#fff"></div>
<div class="abs" style="left:1905px;top:968px;width:14px;height:14px;background:#fff"></div>
<svg class="abs" style="left:1905px;top:898px" width="14" height="14" viewBox="0 0 14 14"><path d="M2.800 9.300h7.600l-3.800-4.200z" fill="#444"/></svg>
<svg class="abs" style="left:1905px;top:968px" width="14" height="14" viewBox="0 0 14 14"><path d="M2.800 4.700h7.600l-3.800 4.200z" fill="#444"/></svg>
<!-- wireshark status -->
<div id="wstatus" class="abs"></div>
<svg class="abs" style="left:8px;top:982px" width="44" height="22" viewBox="8 982 44 22"><circle cx="18.100" cy="992.900" r="6.500" fill="#e2e066" stroke="#6e6c2c" stroke-width="1"/><rect x="34.200" y="986.800" width="11.600" height="12.600" fill="#fbfbfb" stroke="#c8c8c8" stroke-width=".7"/><path d="M34.500 987h11v2.600h-11z" fill="#3fb2d4"/><path d="M37.500 989.400c.6-1.500 2-2.200 3.200-2c-.6.600-.8 1.300-.3 2z" fill="#fff"/><path d="M36 995.500h8M36 997.500h6" stroke="#c0c8d0" stroke-width=".7"/><path d="M46.600 987.400l-7.400 7.600" stroke="#3c3c48" stroke-width="2.200" stroke-linecap="round"/><path d="M47.300 986.600l-1.100 1.200" stroke="#b03060" stroke-width="2.200" stroke-linecap="round"/><path d="M38.200 996.200l.6-1.600l1 1z" fill="#222"/></svg>
<div class="abs st" style="left:65px">Domain Name System: Protocol</div>
<div class="abs" style="left:1357px;top:987px;width:1px;height:13px;border-left:1px dotted #b0b0b0"></div>
<div class="abs st" style="left:1373px;font-size:11.750px">分组: 138 · 已显示: 103 (74.6%) · 已丢弃: 0 (0.0%)</div>
<div class="abs" style="left:1819px;top:987px;width:1px;height:13px;border-left:1px dotted #b0b0b0"></div>
<div class="abs st" style="left:1835.500px;font-size:11.750px">配置<span style="display:inline-block;width:12px;text-align:center">:</span>Default</div>
<!-- vmware status -->
<div id="vstatus" class="abs"></div>
<div id="vstext" class="abs">要将输入定向到该虚拟机，请将鼠标指针移入其中或按 Ctrl+G。</div>
<svg class="abs" style="left:1700px;top:1004px" width="220" height="26" viewBox="0 0 220 26" fill="none" stroke="#4c5566" stroke-width="1.500">
<path d="M12.800 17.500l3-10.500h11.500l3.200 10.500M12.800 17.500v4.300h18.700v-4.300M12.800 17.500h18.700"/><circle cx="27.500" cy="19.700" r="3.300" fill="#7ab82a" stroke="#f0f0f0" stroke-width=".8"/>
<circle cx="47" cy="13.800" r="8.300"/><circle cx="47" cy="13.800" r="1.700"/><path d="M41.300 11.500a6 6 0 0 1 3-3.300" stroke-width="1.200"/><circle cx="52" cy="19.700" r="3.300" fill="#7ab82a" stroke="#f0f0f0" stroke-width=".8"/>
<path d="M64 5.700h9.300v6h-9.300zM70.300 10.300h10.500v7.500h-10.500z" fill="#f0f0f0"/><path d="M68 12.500l2.300 1.500l-2.300 1.500" stroke-width="1"/><path d="M64 13v9.500h8" stroke-dasharray="1.200 1.200" stroke-width="1.200"/><circle cx="77.500" cy="19.700" r="3.300" fill="#7ab82a" stroke="#f0f0f0" stroke-width=".8"/>
<g stroke="#b4b4b4"><path d="M91.500 11v-4.500h10.500v4.500M88.500 11h17v8h-17zM91.800 16h10v6.500h-10z" fill="#f0f0f0"/></g>
<path d="M114.500 11h3.200l4.500-4.500v15l-4.500-4.500h-3.200z"/><path d="M124.500 9.500a6 6 0 0 1 1.500 4M127 7.500a9 9 0 0 1 2 5" stroke-width="1.100"/><circle cx="127.500" cy="19.700" r="3.300" fill="#7ab82a" stroke="#f0f0f0" stroke-width=".8"/>
<g stroke="#bcbcbc" stroke-width="1.200"><circle cx="146.700" cy="13.800" r="7"/><circle cx="146.700" cy="13.800" r="3.300"/><circle cx="146.700" cy="13.800" r=".8"/></g>
<path d="M164.500 4v21" stroke="#7c7c7c" stroke-width="1.200"/>
<path d="M176 6h16.500v12l-5 4.500h-11.500z" fill="#3ddac6" stroke="#238f82" stroke-width="1.300"/><path d="M192.500 18h-5v4.500" fill="#f4fffd" stroke="#238f82" stroke-width="1.100"/>
</svg>
<!-- temperature widget -->
<svg class="abs" style="left:1790px;top:52px" width="100" height="100" viewBox="0 0 100 100">
<defs><radialGradient id="tw" cx=".5" cy=".5" r=".5"><stop offset="0" stop-color="#ffffff"/><stop offset=".75" stop-color="#fffbf4"/><stop offset="1" stop-color="#ffeed4"/></radialGradient></defs>
<circle cx="49.400" cy="48" r="41" fill="#f1f0ef" opacity=".92"/>
<circle cx="49.400" cy="48" r="36" fill="url(#tw)"/>
<circle cx="49.400" cy="48" r="38.300" fill="none" stroke="#fbb84a" stroke-opacity=".45" stroke-width="7.600" stroke-dasharray="195 241" transform="rotate(-89 49.400 48)"/>
<circle cx="49.400" cy="48" r="38.300" fill="none" stroke="#f8a828" stroke-width="5.200" stroke-dasharray="195 241" transform="rotate(-89 49.400 48)"/>
<path d="M27.300 60.800a2.500 2.500 0 0 1 5 0v4.200a4.300 4.300 0 1 1-5 0z" fill="#52d96e" stroke="#8ee8a2" stroke-width=".6"/><path d="M29.800 61v7" stroke="#1fa847" stroke-width="1.100"/><circle cx="29.800" cy="68.300" r="1.500" fill="#1fa847"/>
<text x="25.600" y="48.300" font-family="Liberation Sans, sans-serif" font-size="28.500" fill="#4c4c4c" stroke="#fffdf9" stroke-width=".7" letter-spacing="-.6">81</text>
<text x="57.600" y="49.600" font-family="Liberation Sans, sans-serif" font-size="14.500" font-weight="bold" fill="#4c4c4c" textLength="12.400" lengthAdjust="spacingAndGlyphs">%</text>
<text x="41.800" y="67.800" font-family="Liberation Sans, sans-serif" font-size="11" fill="#222">41°C</text>
</svg>
</body></html>
